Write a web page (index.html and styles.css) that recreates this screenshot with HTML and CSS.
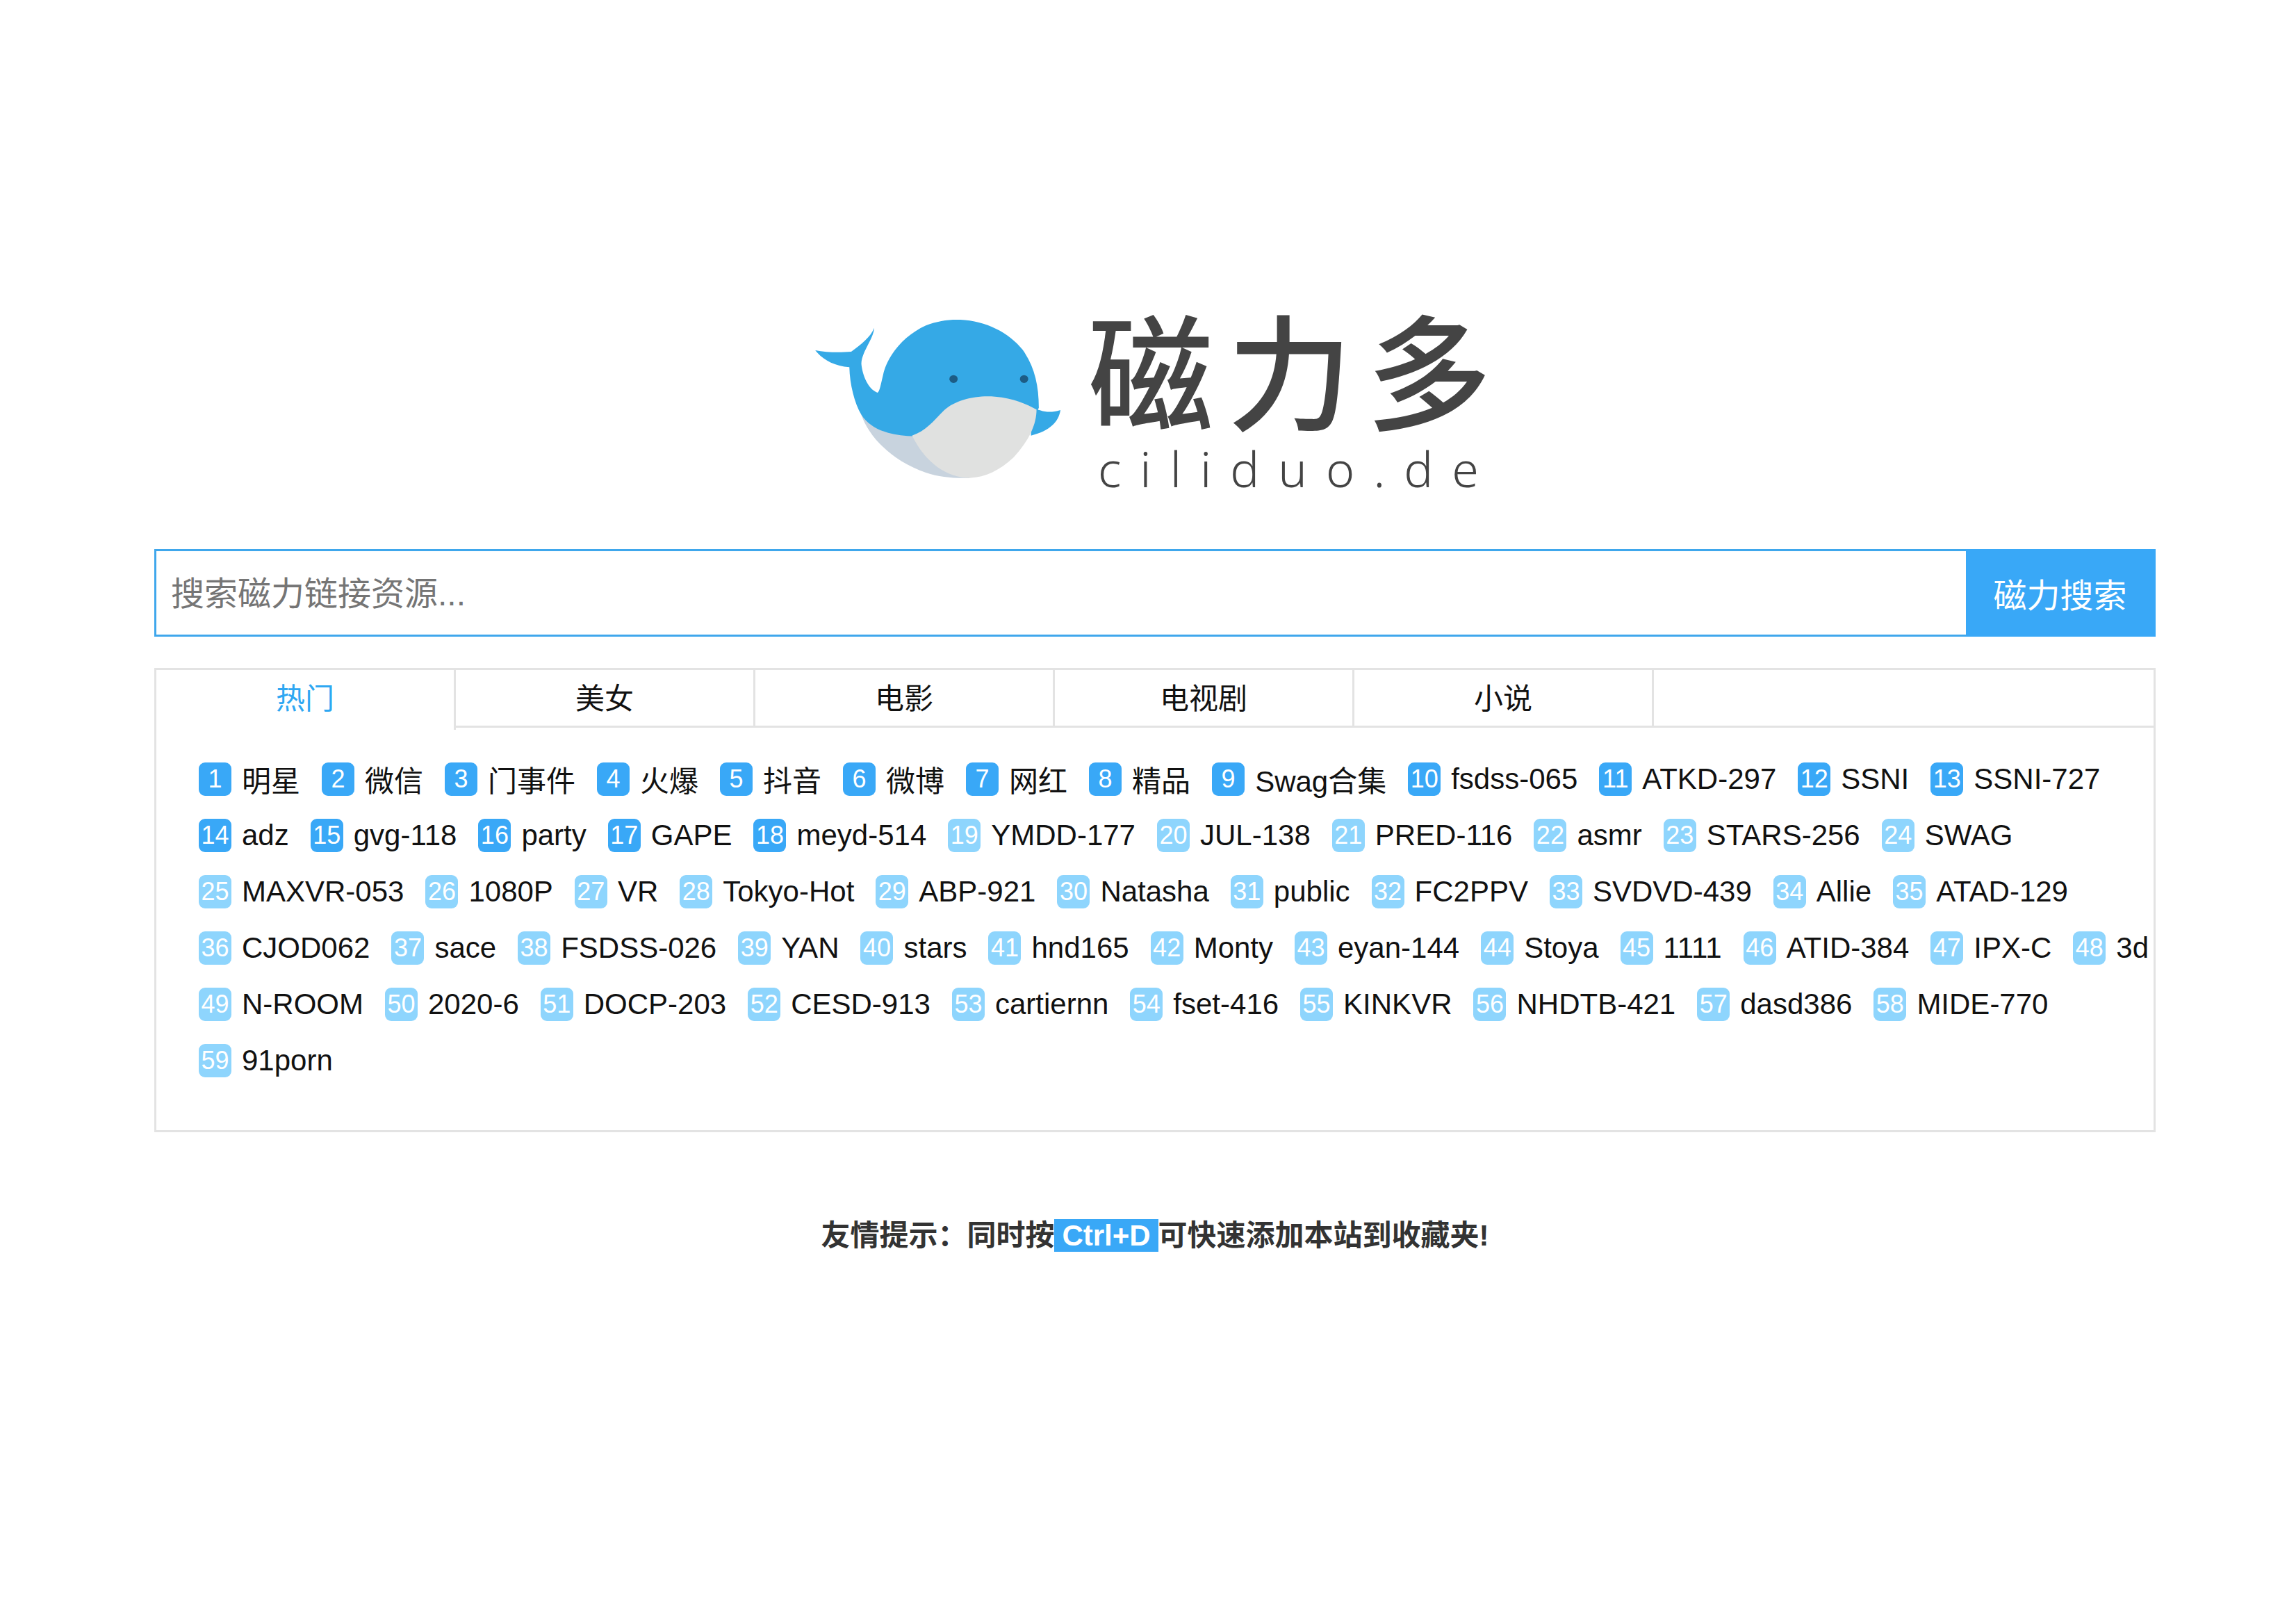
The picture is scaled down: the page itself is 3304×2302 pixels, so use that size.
FILE: index.html
```html
<!DOCTYPE html>
<html lang="zh-CN">
<head>
<meta charset="utf-8">
<title>磁力多</title>
<link rel="stylesheet" href="styles.css">
</head>
<body>
<header class="logo">
  <svg class="whale" viewBox="0 0 600 900" preserveAspectRatio="none" aria-hidden="true">
    <path class="slate" d="M150 530 C165 620 215 730 290 780 C320 800 350 805 385 803 L300 640 L250 600 Z"/>
    <path class="blue" d="M520 500 C540 510 552 528 582 510 C578 560 560 600 518 620 Z"/>
    <path class="blue" d="M50 252 C75 262 105 262 128 258 C150 225 170 195 178 155 C176 205 150 260 150 310 C152 360 165 420 185 435 C190 430 192 400 197 360 C205 280 240 190 290 145 C315 125 340 118 365 120 C420 125 470 175 500 250 C525 320 535 400 535 500 L500 640 L250 622 C205 615 170 590 150 530 C135 480 125 400 124 325 C90 320 65 290 50 252 Z"/>
    <path class="belly" d="M260 620 C290 600 305 560 330 510 C355 465 400 445 440 452 C480 458 510 485 530 508 C530 570 515 640 480 715 C450 770 420 800 385 803 C335 800 290 740 260 620 Z"/>
    <ellipse class="eye" cx="350" cy="376" rx="9" ry="17"/>
    <ellipse class="eye" cx="503" cy="376" rx="9" ry="17"/>
  </svg>
  <div class="brand">
    <div class="brand-name">磁力多</div>
    <div class="brand-url">ciliduo.de</div>
  </div>
</header>
<main class="wrap">
  <form class="search">
    <input class="search-input" type="text" placeholder="搜索磁力链接资源...">
    <button class="search-btn" type="button">磁力搜索</button>
  </form>
  <section class="panel">
    <div class="tabs">
      <div class="tab active">热门</div>
      <div class="tab">美女</div>
      <div class="tab">电影</div>
      <div class="tab">电视剧</div>
      <div class="tab">小说</div>
      <div class="tab-fill"></div>
    </div>
    <ul class="tags">
      <li class="tag"><b class="num">1</b>明星</li>
      <li class="tag"><b class="num">2</b>微信</li>
      <li class="tag"><b class="num">3</b>门事件</li>
      <li class="tag"><b class="num">4</b>火爆</li>
      <li class="tag"><b class="num">5</b>抖音</li>
      <li class="tag"><b class="num">6</b>微博</li>
      <li class="tag"><b class="num">7</b>网红</li>
      <li class="tag"><b class="num">8</b>精品</li>
      <li class="tag"><b class="num">9</b>Swag合集</li>
      <li class="tag"><b class="num">10</b>fsdss-065</li>
      <li class="tag"><b class="num">11</b>ATKD-297</li>
      <li class="tag"><b class="num">12</b>SSNI</li>
      <li class="tag"><b class="num">13</b>SSNI-727</li>
      <li class="tag"><b class="num">14</b>adz</li>
      <li class="tag"><b class="num">15</b>gvg-118</li>
      <li class="tag"><b class="num">16</b>party</li>
      <li class="tag"><b class="num">17</b>GAPE</li>
      <li class="tag"><b class="num">18</b>meyd-514</li>
      <li class="tag light"><b class="num">19</b>YMDD-177</li>
      <li class="tag light"><b class="num">20</b>JUL-138</li>
      <li class="tag light"><b class="num">21</b>PRED-116</li>
      <li class="tag light"><b class="num">22</b>asmr</li>
      <li class="tag light"><b class="num">23</b>STARS-256</li>
      <li class="tag light"><b class="num">24</b>SWAG</li>
      <li class="tag light"><b class="num">25</b>MAXVR-053</li>
      <li class="tag light"><b class="num">26</b>1080P</li>
      <li class="tag light"><b class="num">27</b>VR</li>
      <li class="tag light"><b class="num">28</b>Tokyo-Hot</li>
      <li class="tag light"><b class="num">29</b>ABP-921</li>
      <li class="tag light"><b class="num">30</b>Natasha</li>
      <li class="tag light"><b class="num">31</b>public</li>
      <li class="tag light"><b class="num">32</b>FC2PPV</li>
      <li class="tag light"><b class="num">33</b>SVDVD-439</li>
      <li class="tag light"><b class="num">34</b>Allie</li>
      <li class="tag light"><b class="num">35</b>ATAD-129</li>
      <li class="tag light"><b class="num">36</b>CJOD062</li>
      <li class="tag light"><b class="num">37</b>sace</li>
      <li class="tag light"><b class="num">38</b>FSDSS-026</li>
      <li class="tag light"><b class="num">39</b>YAN</li>
      <li class="tag light"><b class="num">40</b>stars</li>
      <li class="tag light"><b class="num">41</b>hnd165</li>
      <li class="tag light"><b class="num">42</b>Monty</li>
      <li class="tag light"><b class="num">43</b>eyan-144</li>
      <li class="tag light"><b class="num">44</b>Stoya</li>
      <li class="tag light"><b class="num">45</b>1111</li>
      <li class="tag light"><b class="num">46</b>ATID-384</li>
      <li class="tag light"><b class="num">47</b>IPX-C</li>
      <li class="tag light"><b class="num">48</b>3d</li>
      <li class="tag light"><b class="num">49</b>N-ROOM</li>
      <li class="tag light"><b class="num">50</b>2020-6</li>
      <li class="tag light"><b class="num">51</b>DOCP-203</li>
      <li class="tag light"><b class="num">52</b>CESD-913</li>
      <li class="tag light"><b class="num">53</b>cartiernn</li>
      <li class="tag light"><b class="num">54</b>fset-416</li>
      <li class="tag light"><b class="num">55</b>KINKVR</li>
      <li class="tag light"><b class="num">56</b>NHDTB-421</li>
      <li class="tag light"><b class="num">57</b>dasd386</li>
      <li class="tag light"><b class="num">58</b>MIDE-770</li>
      <li class="tag light"><b class="num">59</b>91porn</li>
    </ul>
  </section>
  <p class="note">友情提示：同时按<span class="key">Ctrl+D</span>可快速添加本站到收藏夹!</p>
</main>
</body>
</html>
```
FILE: styles.css
```css
* { box-sizing: border-box; }
html, body { margin: 0; padding: 0; background: #fff; }
body {
  height: 2302px;
  overflow: hidden;
  font-family: "Liberation Sans", "Noto Sans CJK SC", sans-serif;
  color: #111;
  font-size: 42px;
}
.logo {
  display: flex;
  height: 790px;
  padding: 420px 0 0 1140px;
}
.whale { width: 398px; height: 300px; flex: none; }
.blue { fill: #35a9e6; }
.belly { fill: #e0e1e0; }
.slate { fill: #c8d3de; }
.eye { fill: #1d5c85; }
.brand { margin-left: 28px; padding-top: 10px; }
.brand-name {
  font-family: "Noto Sans CJK SC", sans-serif;
  font-weight: 500;
  font-size: 180px;
  line-height: 194px;
  letter-spacing: 20px;
  color: #444;
  white-space: nowrap;
}
.brand-url {
  font-family: "Noto Sans", sans-serif;
  font-weight: 300;
  font-size: 70px;
  line-height: 80px;
  letter-spacing: 27px;
  color: #444;
  margin: 10px 0 0 14px;
  white-space: nowrap;
}
.wrap { width: 2880px; margin-left: 222px; }
.search { display: flex; height: 126px; }
.search-input {
  flex: 1;
  min-width: 0;
  height: 100%;
  border: 3px solid #3fa7ec;
  border-right: 0;
  border-radius: 0;
  padding: 2px 21px 0;
  outline: 0;
  font: 48px "Liberation Sans", "Noto Sans CJK SC", sans-serif;
}
.search-input::placeholder { color: #757575; opacity: 1; }
.search-btn {
  width: 273px;
  border: 0;
  border-radius: 0;
  background: #39a8f7;
  color: #fff;
  padding: 0 2px 0 0;
  font: 48px "Noto Sans CJK SC", sans-serif;
}
.panel {
  margin-top: 45px;
  height: 668px;
  border: 3px solid #e3e3e3;
}
.tabs { display: flex; height: 83px; font-family: "Noto Sans CJK SC", sans-serif; }
.tab {
  width: 431px;
  height: 83px;
  line-height: 76px;
  text-align: center;
  border-right: 3px solid #e3e3e3;
  border-bottom: 3px solid #e3e3e3;
}
.tab.active {
  height: 86px;
  color: #2ea7f2;
  border-bottom: 0;
}
.tab-fill { flex: 1; border-bottom: 3px solid #e3e3e3; }
.tags {
  list-style: none;
  margin: 0;
  padding: 33px 0 0 61px;
  display: flex;
  flex-wrap: wrap;
  column-gap: 31px;
}
.tag {
  display: flex;
  align-items: center;
  height: 81px;
  gap: 15px;
  white-space: nowrap;
}
.num {
  width: 47px;
  height: 48px;
  line-height: 48px;
  text-align: center;
  border-radius: 9px;
  background: #39a8f7;
  color: #fff;
  font-weight: 400;
  font-size: 36px;
}
.light .num { background: #8ed5fd; }
.note {
  margin: 125px 0 0;
  text-align: center;
  font-weight: 700;
  color: #333;
  line-height: 47px;
}
.key {
  display: inline-block;
  padding: 0 11px;
  background: #39a8f7;
  color: #fff;
}
```
